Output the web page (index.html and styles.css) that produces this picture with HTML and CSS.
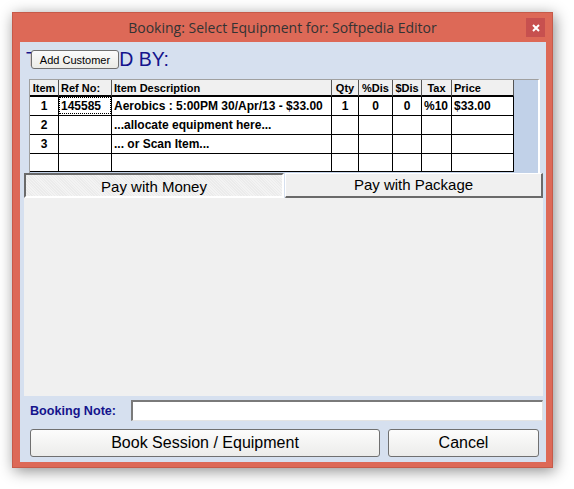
FILE: index.html
```html
<!DOCTYPE html>
<html>
<head>
<meta charset="utf-8">
<link rel="stylesheet" href="styles.css">
</head>
<body>
<div class="window">
  <div class="titlebar">
    <span></span>
    <span class="title">Booking: Select Equipment for: Softpedia Editor</span>
    <span class="close-wrap">
      <span class="close"><svg width="8" height="8" viewBox="0 0 8 8"><path d="M1 1 L7 7 M7 1 L1 7" stroke="#fff" stroke-width="2" fill="none"/></svg></span>
    </span>
  </div>
  <div class="client">
    <div class="taken-row">
      <span class="taken-label">TENDERED BY:</span>
      <button class="add-btn">Add Customer</button>
    </div>
    <div class="grid-box">
      <div class="grid">
        <div class="hd c">Item</div>
        <div class="hd">Ref No:</div>
        <div class="hd">Item Description</div>
        <div class="hd c">Qty</div>
        <div class="hd c">%Dis</div>
        <div class="hd c">$Dis</div>
        <div class="hd c">Tax</div>
        <div class="hd">Price</div>

        <div class="cell c">1</div>
        <div class="cell focus"><span class="focus-box">145585</span></div>
        <div class="cell">Aerobics : 5:00PM 30/Apr/13 - $33.00</div>
        <div class="cell c">1</div>
        <div class="cell c">0</div>
        <div class="cell c">0</div>
        <div class="cell">%10</div>
        <div class="cell">$33.00</div>

        <div class="cell c">2</div>
        <div class="cell"></div>
        <div class="cell">...allocate equipment here...</div>
        <div class="cell"></div>
        <div class="cell"></div>
        <div class="cell"></div>
        <div class="cell"></div>
        <div class="cell"></div>

        <div class="cell c">3</div>
        <div class="cell"></div>
        <div class="cell">... or Scan Item...</div>
        <div class="cell"></div>
        <div class="cell"></div>
        <div class="cell"></div>
        <div class="cell"></div>
        <div class="cell"></div>

        <div class="cell last"></div>
        <div class="cell last"></div>
        <div class="cell last"></div>
        <div class="cell last"></div>
        <div class="cell last"></div>
        <div class="cell last"></div>
        <div class="cell last"></div>
        <div class="cell last"></div>
      </div>
    </div>
    <div class="tabs">
      <div class="tab tab-active">Pay with Money</div>
      <div class="tab tab-raised">Pay with Package</div>
    </div>
    <div class="panel"></div>
    <div class="note-row">
      <span class="note-label">Booking Note:</span>
      <div class="note-input"></div>
    </div>
    <div class="btn-row">
      <button class="btn btn-book">Book Session / Equipment</button>
      <button class="btn btn-cancel">Cancel</button>
    </div>
  </div>
</div>
</body>
</html>
```

FILE: styles.css
```css
html, body {
  margin: 0;
  padding: 0;
  background: #ffffff;
}
body {
  width: 574px;
  height: 489px;
  overflow: hidden;
  font-family: "Liberation Sans", Arial, sans-serif;
}
.window {
  margin: 12px 0 0 12px;
  width: 541px;
  height: 456px;
  box-sizing: border-box;
  background: #dd6957;
  border: 1px solid #c65a49;
  box-shadow: 2px 3px 14px rgba(0, 0, 0, 0.45);
  display: flex;
  flex-direction: column;
}
.titlebar {
  height: 29px;
  display: grid;
  grid-template-columns: 1fr auto 1fr;
  align-items: start;
}
.title {
  font-family: "Open Sans", "Noto Sans", sans-serif;
  font-size: 14px;
  color: #333333;
  line-height: 18px;
  padding-top: 6px;
  white-space: nowrap;
}
.close-wrap {
  display: flex;
  justify-content: flex-end;
  padding: 5px 7px 0 0;
}
.close {
  width: 19px;
  height: 19px;
  background: #c7504f;
  display: flex;
  align-items: center;
  justify-content: center;
}
.close svg { display: block; }
.client {
  margin: 0 6px 5px 7px;
  flex: 1;
  background: #d6e0ef;
  display: flex;
  flex-direction: column;
}
.taken-row {
  position: relative;
  height: 37px;
  box-sizing: border-box;
  padding: 8px 0 0 6px;
}
.taken-label {
  font-size: 19.5px;
  line-height: 19px;
  color: #14148c;
  white-space: nowrap;
}
.add-btn {
  position: absolute;
  left: 11px;
  top: 8px;
  width: 88px;
  height: 19px;
  margin: 0;
  padding: 0;
  box-sizing: border-box;
  border: 1px solid #707070;
  border-radius: 3px;
  background: linear-gradient(#fbfbfb, #ebebe6);
  font-family: "Liberation Sans", Arial, sans-serif;
  font-size: 11px;
  color: #000;
}
.grid-box {
  margin-left: 9px;
  width: 511px;
  height: 94px;
  box-sizing: border-box;
  border-top: 1px solid #a0a0a0;
  border-left: 1px solid #a0a0a0;
  border-right: 2px solid #ffffff;
  background: #c1d1e8;
}
.grid {
  display: grid;
  grid-template-columns: 29px 53px 220px 27px 34px 29px 30px 62px;
  grid-template-rows: 17px 19px 19px 19px 18px;
  width: 484px;
  background: #ffffff;
}
.hd, .cell {
  box-sizing: border-box;
  border-right: 1px solid #000;
  font-size: 11px;
  font-weight: bold;
  color: #000;
  white-space: nowrap;
  overflow: hidden;
  padding-left: 2px;
}
.hd {
  background: #f0f0f0;
  border-bottom: 2px solid #000;
  line-height: 16px;
  border-right-color: #555;
}
.cell {
  border-bottom: 1px solid #000;
  font-size: 12px;
  line-height: 18px;
}
.c {
  text-align: center;
  padding-left: 0;
}
.focus {
  padding: 0;
}
.focus-box {
  display: block;
  height: 17px;
  line-height: 16px;
  box-sizing: border-box;
  border: 1px dotted #000;
  padding-left: 1px;
}
.tabs {
  margin-left: 4px;
  width: 519px;
  height: 25px;
  display: flex;
  gap: 1px;
}
.tab {
  box-sizing: border-box;
  height: 25px;
  font-size: 15px;
  color: #000;
  text-align: center;
}
.tab-active {
  width: 260px;
  border-top: 2px solid #6a6a6a;
  border-left: 2px solid #6a6a6a;
  border-right: 2px solid #ffffff;
  border-bottom: 2px solid #ffffff;
  background-color: #f3f3f3;
  background-image: repeating-linear-gradient(45deg, rgba(0,0,0,0.03) 0 1px, transparent 1px 2px);
  line-height: 22px;
  padding-top: 1px;
}
.tab-raised {
  width: 258px;
  border-top: 1px solid #ffffff;
  border-left: 1px solid #ffffff;
  border-right: 2px solid #6a6a6a;
  border-bottom: 2px solid #6a6a6a;
  background: #f0f0f0;
  line-height: 21px;
}
.panel {
  margin-left: 4px;
  width: 519px;
  height: 198px;
  background: #f0f0f0;
}
.note-row {
  margin-top: 4px;
  height: 21px;
  display: flex;
  align-items: center;
}
.note-label {
  margin-left: 10px;
  width: 101px;
  font-size: 12.6px;
  font-weight: bold;
  color: #14148c;
  white-space: nowrap;
}
.note-input {
  width: 412px;
  height: 21px;
  box-sizing: border-box;
  background: #ffffff;
  border-top: 2px solid #7a7a7a;
  border-left: 2px solid #7a7a7a;
  border-right: 1px solid #e3e3e3;
  border-bottom: 1px solid #e3e3e3;
}
.btn-row {
  margin: 8px 0 0 10px;
  display: flex;
  gap: 8px;
}
.btn {
  height: 28px;
  margin: 0;
  padding: 0;
  box-sizing: border-box;
  border: 1px solid #707070;
  border-radius: 3px;
  background: linear-gradient(#fcfcfc, #ececea);
  font-family: "Liberation Sans", Arial, sans-serif;
  font-size: 16px;
  color: #000;
}
.btn-book { width: 350px; }
.btn-cancel { width: 151px; }
```
